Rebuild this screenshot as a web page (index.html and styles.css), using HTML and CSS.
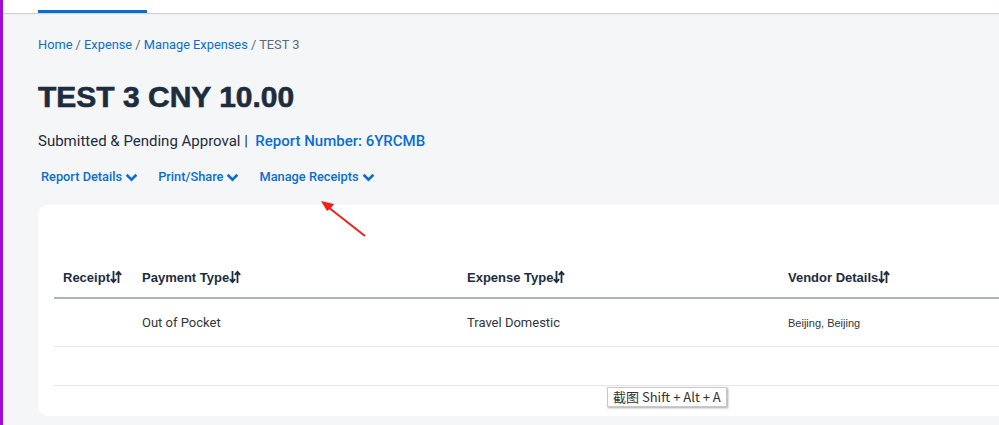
FILE: index.html
```html
<!DOCTYPE html>
<html lang="en">
  <head>
    <meta charset="UTF-8" />
    <meta name="viewport" content="width=device-width, initial-scale=1.0" />
    <title>TEST 3 - Expense Report</title>
    <link rel="stylesheet" href="styles.css">
  </head>
  <body>
    <div class="page">
      <header class="topbar">
        <span class="tab-active"></span>
      </header>

      <main class="content">
        <nav class="breadcrumb">
          <a href="#">Home</a> / <a href="#">Expense</a> / <a href="#">Manage Expenses</a> / <span>TEST 3</span>
        </nav>

        <h1 class="report-title">TEST 3 CNY 10.00</h1>

        <div class="report-status">
          Submitted &amp; Pending Approval |&nbsp; <a href="#">Report Number: 6YRCMB</a>
        </div>

        <div class="report-actions">
          <a href="#">Report Details
            <svg class="chev" viewBox="0 0 12 8"><polyline points="1.5,1.5 6,6 10.5,1.5" /></svg>
          </a>
          <a href="#">Print/Share
            <svg class="chev" viewBox="0 0 12 8"><polyline points="1.5,1.5 6,6 10.5,1.5" /></svg>
          </a>
          <a href="#">Manage Receipts
            <svg class="chev" viewBox="0 0 12 8"><polyline points="1.5,1.5 6,6 10.5,1.5" /></svg>
          </a>
        </div>

        <section class="card">
          <table class="expense-table">
            <thead>
              <tr>
                <th class="col-receipt">Receipt<svg class="sort" viewBox="0 0 12 14"><path d="M3.5 1v11M0.8 9.2l2.7 3 2.7-3M8.5 13V2M5.8 4.8l2.7-3 2.7 3" /></svg></th>
                <th class="col-payment">Payment Type<svg class="sort" viewBox="0 0 12 14"><path d="M3.5 1v11M0.8 9.2l2.7 3 2.7-3M8.5 13V2M5.8 4.8l2.7-3 2.7 3" /></svg></th>
                <th class="col-type">Expense Type<svg class="sort" viewBox="0 0 12 14"><path d="M3.5 1v11M0.8 9.2l2.7 3 2.7-3M8.5 13V2M5.8 4.8l2.7-3 2.7 3" /></svg></th>
                <th class="col-vendor">Vendor Details<svg class="sort" viewBox="0 0 12 14"><path d="M3.5 1v11M0.8 9.2l2.7 3 2.7-3M8.5 13V2M5.8 4.8l2.7-3 2.7 3" /></svg></th>
              </tr>
            </thead>
            <tbody>
              <tr>
                <td></td>
                <td>Out of Pocket</td>
                <td>Travel Domestic</td>
                <td class="vendor">Beijing, Beijing</td>
              </tr>
              <tr class="empty-row">
                <td></td>
                <td></td>
                <td></td>
                <td></td>
              </tr>
            </tbody>
          </table>
        </section>
      </main>

      <!-- annotation arrow drawn over the screenshot -->
      <svg class="annotation" viewBox="0 0 50 40">
        <path class="arrow-line" d="M45 36 L8 7" />
        <path class="arrow-head" d="M1 1 L14 4 L11 8 L7 11 Z" />
      </svg>

      <div class="shortcut-tip">截图 Shift + Alt + A</div>
    </div>
  </body>
</html>
```

FILE: styles.css
```css
body {
  margin: 0;
  font-family: Roboto, "Liberation Sans", Arial, sans-serif;
  background-color: #f5f6f7;
  color: #32363a;
  overflow: hidden;
}

a {
  color: #0a6ed1;
  text-decoration: none;
}

.page {
  position: relative;
  min-height: 425px;
  border-left: 3px solid #a00fcf;
}

.topbar {
  height: 13px;
  background-color: #fff;
  box-shadow: 0 1px 1px rgba(0, 0, 0, 0.15);
  padding-left: 35px;
  display: flex;
  align-items: flex-end;
}

.tab-active {
  width: 109px;
  height: 3px;
  background-color: #0a6ed1;
}

.content {
  padding: 23px 0 0 35px;
}

.breadcrumb {
  font-size: 12.8px;
  line-height: 18px;
  color: #556b82;
}

.breadcrumb a {
  color: #0a6ed1;
}

.report-title {
  margin: 25px 0 0;
  font-family: "Liberation Sans", Arial, sans-serif;
  font-size: 30px;
  line-height: 36px;
  font-weight: 900;
  color: #1d2d3e;
  -webkit-text-stroke: 0.6px #1d2d3e;
}

.report-status {
  margin-top: 16px;
  font-size: 15px;
  line-height: 20px;
  color: #1d2d3e;
}

.report-status a {
  font-weight: 500;
  color: #0a6ed1;
}

.report-actions {
  display: flex;
  gap: 20px;
  margin-top: 17px;
  padding-left: 3px;
}

.report-actions a {
  display: flex;
  align-items: center;
  gap: 3px;
  font-size: 12.8px;
  line-height: 18px;
  font-weight: 500;
}

.chev {
  width: 13px;
  height: 9px;
  fill: none;
  stroke: #0a6ed1;
  stroke-width: 2.4;
}

.card {
  margin-top: 19px;
  margin-right: -40px;
  background-color: #fff;
  border-radius: 10px;
  padding: 53px 0 30px 16px;
}

.expense-table {
  width: 100%;
  border-collapse: collapse;
  font-size: 13px;
}

.expense-table th {
  text-align: left;
  font-family: "Liberation Sans", Arial, sans-serif;
  font-weight: bold;
  color: #1d2d3e;
  padding: 11px 0 11px 9px;
  height: 17px;
  border-bottom: 2px solid #a9b4be;
  white-space: nowrap;
}

.expense-table td {
  padding: 0 0 0 9px;
  height: 47px;
  border-bottom: 1px solid #e5e5e5;
  color: #32363a;
}

.expense-table .empty-row td {
  height: 38px;
}

.col-receipt { width: 70px; }
.col-payment { width: 316px; }
.col-type { width: 312px; }

.expense-table td.vendor {
  font-family: "Liberation Sans", Arial, sans-serif;
  font-size: 11px;
}

.sort {
  width: 12px;
  height: 14px;
  vertical-align: -2px;
  fill: none;
  stroke: #1d2d3e;
  stroke-width: 1.8;
}

.annotation {
  position: absolute;
  left: 317px;
  top: 200px;
  width: 50px;
  height: 40px;
}

.arrow-line {
  stroke: #f0201a;
  stroke-width: 2;
  fill: none;
}

.arrow-head {
  fill: #f0201a;
}

.shortcut-tip {
  position: absolute;
  left: 604px;
  top: 387px;
  padding: 1px 5px 2px;
  font-family: "Noto Sans CJK SC", sans-serif;
  font-size: 13px;
  line-height: 15px;
  color: #333;
  background-color: #fff;
  border: 1px solid #c8c8c8;
  box-shadow: 1px 1px 2px rgba(0, 0, 0, 0.35);
}
```
